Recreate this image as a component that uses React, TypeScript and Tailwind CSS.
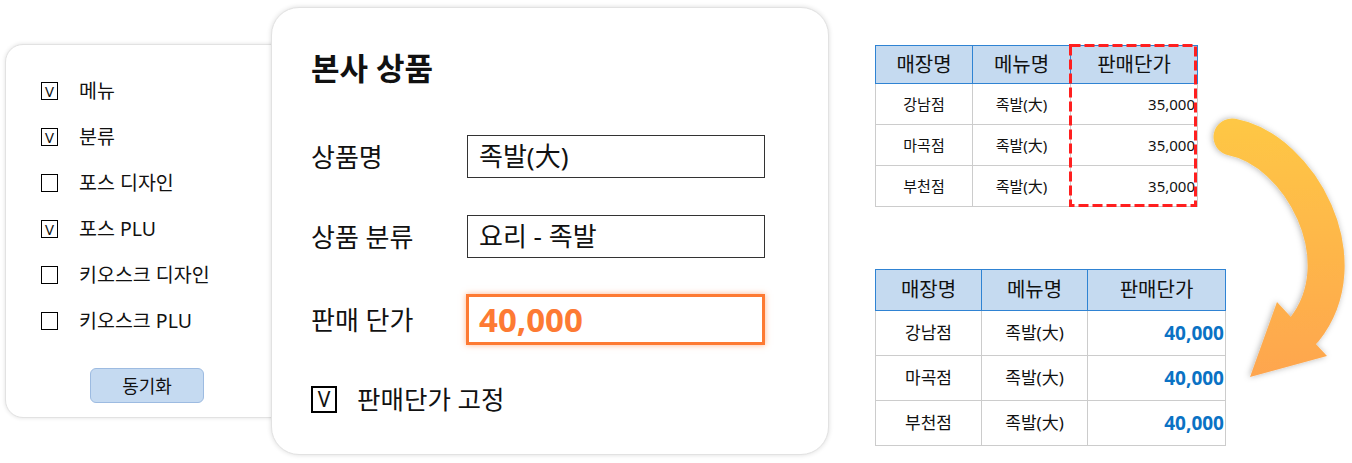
import React from "react";

const syncItems = [
  { label: "메뉴", checked: true },
  { label: "분류", checked: true },
  { label: "포스 디자인", checked: false },
  { label: "포스 PLU", checked: true },
  { label: "키오스크 디자인", checked: false },
  { label: "키오스크 PLU", checked: false },
];

const stores = ["강남점", "마곡점", "부천점"];

function Arrow() {
  return (
    <svg
      className="absolute left-[1190px] top-[100px]"
      width={162}
      height={300}
      viewBox="1190 100 162 300"
    >
      <defs>
        <linearGradient id="arrowFill" gradientUnits="userSpaceOnUse" x1="0" y1="115" x2="0" y2="380">
          <stop offset="0" stopColor="#fec844" />
          <stop offset="1" stopColor="#fea54f" />
        </linearGradient>
        <filter id="arrowShadow" x="-30%" y="-30%" width="160%" height="160%">
          <feDropShadow dx="-1" dy="0" stdDeviation="3" floodColor="#000" floodOpacity="0.3" />
        </filter>
      </defs>
      <g filter="url(#arrowShadow)">
        <path
          d="M 1232 137 C 1300 150, 1360 260, 1304 330"
          fill="none"
          stroke="url(#arrowFill)"
          strokeWidth={37}
          strokeLinecap="round"
        />
        <polygon points="1277,302 1327,356 1250,377" fill="url(#arrowFill)" />
      </g>
    </svg>
  );
}

function SmallBox({ checked }: { checked: boolean }) {
  return (
    <div className="w-[17px] h-[18px] border border-black flex items-center justify-center text-[15px] leading-none">
      {checked ? "V" : ""}
    </div>
  );
}

export default function App() {
  return (
    <div className="relative w-[1352px] h-[463px] bg-white flex items-start text-[#111] font-['Noto_Sans','Noto_Sans_CJK_KR',sans-serif] overflow-hidden">
      {/* sync options */}
      <div className="ml-[5px] mt-[44px] w-[285px] h-[374px] rounded-[18px] border border-[#e2e2e2] shadow-[0_0_4px_rgba(0,0,0,0.12)] bg-white flex flex-col pl-[35px] pt-[34px]">
        <div className="flex flex-col gap-[22px]">
          {syncItems.map((item) => (
            <div key={item.label} className="h-[24px] flex items-center gap-[21px]">
              <SmallBox checked={item.checked} />
              <span className="text-[19.5px] leading-[24px]">{item.label}</span>
            </div>
          ))}
        </div>
        <button className="mt-[35px] ml-[49px] w-[114px] h-[35px] rounded-[6px] bg-[#c5daf1] border border-[#9dbbe1] text-[18px] leading-none">
          동기화
        </button>
      </div>

      {/* HQ product */}
      <div className="relative z-10 ml-[-19px] mt-[7px] w-[558px] h-[448px] rounded-[28px] border border-[#e2e2e2] shadow-[0_0_5px_rgba(0,0,0,0.14)] bg-white pl-[39px] pt-[42px]">
        <h1 className="text-[31px] leading-[36px] font-bold">본사 상품</h1>
        <div className="mt-[49px] flex items-center">
          <span className="w-[156px] text-[26px] leading-[30px]">상품명</span>
          <div className="w-[298px] h-[43px] border border-[#333] pl-[11px] flex items-center text-[26px]">
            족발(大)
          </div>
        </div>
        <div className="mt-[37px] flex items-center">
          <span className="w-[156px] text-[26px] leading-[30px]">상품 분류</span>
          <div className="w-[298px] h-[43px] border border-[#333] pl-[11px] flex items-center text-[26px]">
            요리 - 족발
          </div>
        </div>
        <div className="mt-[36px] flex items-center">
          <span className="w-[155px] text-[26px] leading-[30px]">판매 단가</span>
          <div className="w-[299px] h-[51px] border-[3px] border-[#fd7a33] shadow-[0_0_6px_rgba(253,122,51,0.55)] pl-[10px] flex items-center text-[33px] font-bold text-[#fd7a33]">
            40,000
          </div>
        </div>
        <div className="mt-[39px] flex items-center gap-[20px]">
          <div className="w-[26px] h-[27px] border-2 border-black flex items-center justify-center text-[21px] leading-none">
            V
          </div>
          <span className="text-[25.5px] leading-[30px]">판매단가 고정</span>
        </div>
      </div>

      {/* store tables */}
      <div className="ml-[46px] mt-[45px] flex flex-col gap-[62px]">
        <div className="relative">
          <table className="border-collapse table-fixed w-[322px]">
            <colgroup>
              <col className="w-[97px]" />
              <col className="w-[98px]" />
              <col className="w-[127px]" />
            </colgroup>
            <thead>
              <tr className="h-[38px] bg-[#c5daf0] text-[20px]">
                <th className="border border-[#2f83d3] font-normal">매장명</th>
                <th className="border border-[#2f83d3] font-normal">메뉴명</th>
                <th className="border border-[#2f83d3] font-normal">판매단가</th>
              </tr>
            </thead>
            <tbody>
              {stores.map((s) => (
                <tr key={s} className="h-[41px] text-[15px]">
                  <td className="border border-[#cccccc] text-center">{s}</td>
                  <td className="border border-[#cccccc] text-center">족발(大)</td>
                  <td className="border border-[#cccccc] text-right pr-[2px]">35,000</td>
                </tr>
              ))}
            </tbody>
          </table>
          <svg className="absolute left-[194px] top-[-1px]" width={129} height={164}>
            <rect
              x={1.5}
              y={1.5}
              width={125}
              height={160}
              fill="none"
              stroke="#ff1f1f"
              strokeWidth={3}
              strokeDasharray="10 4"
            />
          </svg>
        </div>

        <table className="border-collapse table-fixed w-[350px]">
          <colgroup>
            <col className="w-[106px]" />
            <col className="w-[106px]" />
            <col className="w-[138px]" />
          </colgroup>
          <thead>
            <tr className="h-[41px] bg-[#c5daf0] text-[20px]">
              <th className="border border-[#2f83d3] font-normal">매장명</th>
              <th className="border border-[#2f83d3] font-normal">메뉴명</th>
              <th className="border border-[#2f83d3] font-normal">판매단가</th>
            </tr>
          </thead>
          <tbody>
            {stores.map((s) => (
              <tr key={s} className="h-[45px] text-[17px]">
                <td className="border border-[#cccccc] text-center">{s}</td>
                <td className="border border-[#cccccc] text-center">족발(大)</td>
                <td className="border border-[#cccccc] text-right pr-[1px] font-bold text-[19px] text-[#0a72c4]">40,000</td>
              </tr>
            ))}
          </tbody>
        </table>
      </div>

      <Arrow />
    </div>
  );
}
